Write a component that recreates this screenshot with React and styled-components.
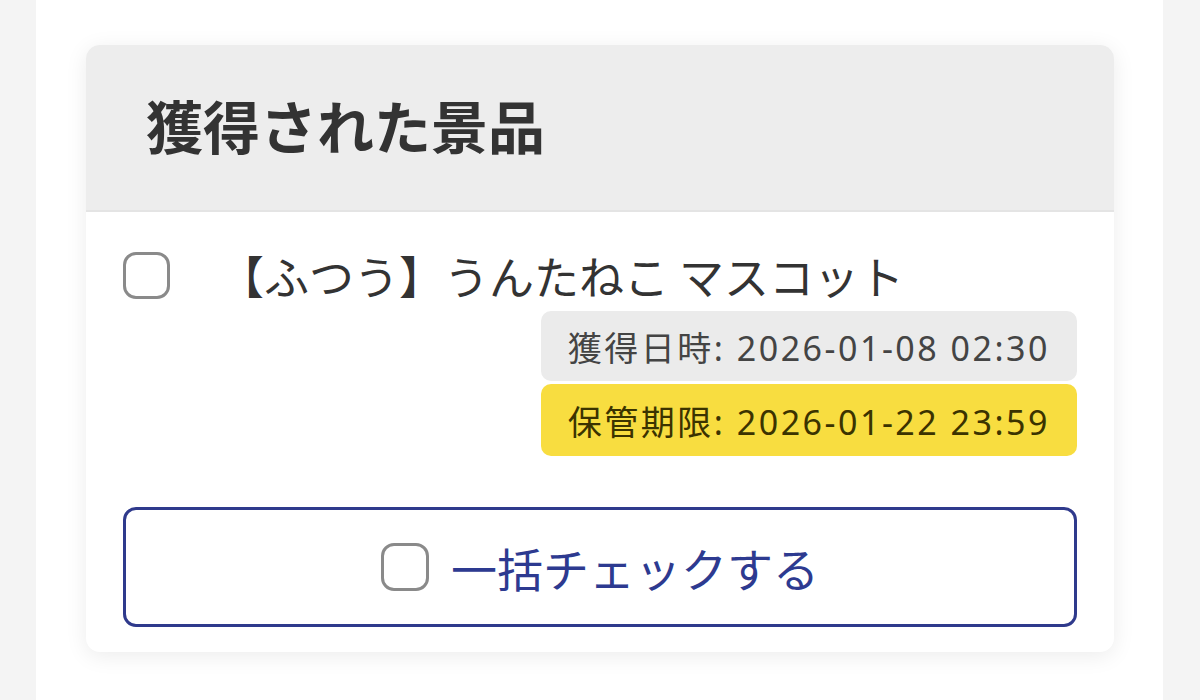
import React from 'react';
import styled, { createGlobalStyle } from 'styled-components';

const GlobalStyle = createGlobalStyle`
  html, body {
    margin: 0;
    padding: 0;
    background: #f4f4f4;
  }
  body {
    font-family: "Noto Sans CJK JP", "Noto Sans", sans-serif;
    color: #333333;
  }
`;

const Column = styled.div`
  margin: 0 37px 0 36px;
  min-height: 700px;
  background: #ffffff;
  padding: 45px 49px 0 50px;
  box-sizing: border-box;
`;

const Card = styled.section`
  background: #ffffff;
  border-radius: 14px;
  box-shadow: 0 4px 22px rgba(0, 0, 0, 0.08);
  overflow: hidden;
`;

const CardHeader = styled.header`
  height: 167px;
  box-sizing: border-box;
  background: #ededed;
  border-bottom: 2px solid #e4e4e4;
  display: flex;
  align-items: center;
  padding: 0 0 6px 60px;
`;

const Title = styled.h2`
  margin: 0;
  font-size: 57px;
  font-weight: 700;
  color: #333333;
  line-height: 1.2;
`;

const CardBody = styled.div`
  padding: 32px 37px 25px;
  display: flex;
  flex-direction: column;
`;

const PrizeRow = styled.div`
  display: flex;
  align-items: center;
  gap: 49px;
  height: 62px;
`;

const Checkbox = styled.span`
  flex: none;
  width: ${(p) => p.size}px;
  height: ${(p) => p.size}px;
  box-sizing: border-box;
  border: 3px solid #8a8a8a;
  border-radius: 13px;
  background: #ffffff;
`;

const PrizeName = styled.div`
  font-size: 45px;
  color: #333333;
  line-height: 1.4;
  white-space: nowrap;
`;

const Badges = styled.div`
  display: flex;
  flex-direction: column;
  align-items: flex-end;
  gap: 3px;
  margin-top: 5px;
`;

const Badge = styled.div`
  height: ${(p) => (p.tone === 'warn' ? 72 : 70)}px;
  box-sizing: border-box;
  display: flex;
  align-items: center;
  padding: 0 27px 0 27px;
  border-radius: 10px;
  font-family: "Noto Sans", "Noto Sans CJK JP", sans-serif;
  font-size: 34px;
  letter-spacing: 2.5px;
  background: ${(p) => (p.tone === 'warn' ? '#f8dd40' : '#ebebeb')};
  color: ${(p) => (p.tone === 'warn' ? '#3b3300' : '#444444')};
  white-space: nowrap;
`;

const BulkButton = styled.button`
  margin-top: 51px;
  height: 120px;
  width: 100%;
  box-sizing: border-box;
  border: 3px solid #2f3a8c;
  border-radius: 13px;
  background: #ffffff;
  display: flex;
  align-items: center;
  justify-content: center;
  gap: 22px;
  font-family: inherit;
  font-size: 46px;
  color: #2d3a90;
  cursor: pointer;
  padding: 0;
`;

const prize = {
  name: '【ふつう】うんたねこ マスコット',
  acquiredAt: '2026-01-08 02:30',
  expiresAt: '2026-01-22 23:59',
};

export default function App() {
  return (
    <>
      <GlobalStyle />
      <Column>
        <Card>
          <CardHeader>
            <Title>獲得された景品</Title>
          </CardHeader>
          <CardBody>
            <PrizeRow>
              <Checkbox size={47} />
              <PrizeName>{prize.name}</PrizeName>
            </PrizeRow>
            <Badges>
              <Badge>獲得日時: {prize.acquiredAt}</Badge>
              <Badge tone="warn">保管期限: {prize.expiresAt}</Badge>
            </Badges>
            <BulkButton type="button">
              <Checkbox size={48} />
              <span>一括チェックする</span>
            </BulkButton>
          </CardBody>
        </Card>
      </Column>
    </>
  );
}
